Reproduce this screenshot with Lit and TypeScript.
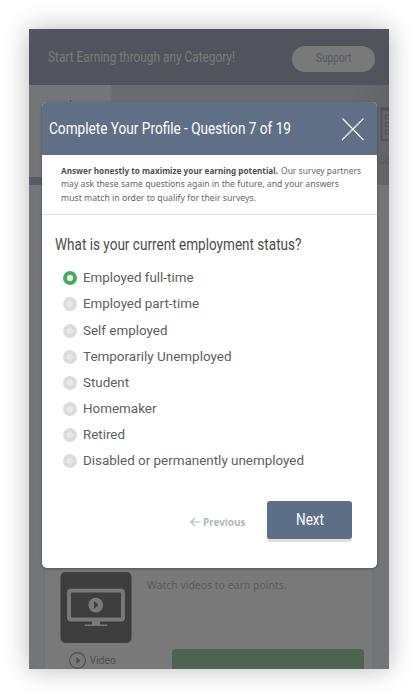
import { LitElement, html, css, svg } from "lit";
import { customElement, property, state } from "lit/decorators.js";

/** One line of text fitted to a fixed measure, for condensed headings and labels. */
@customElement("fit-text")
class FitText extends LitElement {
  @property() text = "";
  @property({ type: Number }) measure = 100;
  @property({ type: Number }) line = 16;
  @property({ type: Number }) base = 12;
  static styles = css`
    :host { display: block; flex: none; }
    svg { display: block; overflow: visible; }
    text { fill: currentColor; }
  `;
  render() {
    return html`<svg width=${this.measure} height=${this.line}>
      ${svg`<text x="0" y=${this.base} textLength=${this.measure} lengthAdjust="spacingAndGlyphs">${this.text}</text>`}
    </svg>`;
  }
}

@customElement("page-behind")
class PageBehind extends LitElement {
  static styles = css`
    :host { display: flex; flex-direction: column; height: 640px; background: #747578; font-family: Roboto, sans-serif; }
    header { flex: none; height: 56px; background: #51545c; display: flex; align-items: center; justify-content: space-between; padding: 0 14px 0 19px; box-sizing: border-box; }
    .tag { font-size: 14px; color: #7b7b79; }
    .support { width: 83px; height: 26px; margin-top: 3px; border-radius: 13px; background: #797979; display: flex; justify-content: center; align-items: center; color: #565962; font-size: 12px; }
    .tabs { flex: none; height: 100px; display: flex; justify-content: space-between; background: linear-gradient(90deg, #6a6c70 88%, #626468); }
    .tab { width: 82px; background: #747578; display: flex; flex-direction: column; justify-content: space-between; }
    .tab svg { margin: 15px 0 0 38px; }
    .bar { height: 8px; background: #595c67; }
    .next { width: 9px; padding-top: 22px; color: #55585e; font-size: 12px; }
    .next svg { display: block; }
    .next fit-text { margin-top: 11px; }
    .card { flex: 1; margin: 0 16px 0 15px; border: solid #707072; border-width: 0 1px; background: #797979; display: flex; align-items: flex-end; }
    .side { width: 72px; margin-left: 15px; height: 97px; display: flex; flex-direction: column; }
    .video { display: flex; margin: 9px 0 0 9px; gap: 3.5px; color: #4e4e4e; font-family: "Noto Sans", sans-serif; font-size: 11px; }
    .main { margin-left: 15px; height: 97px; display: flex; flex-direction: column; justify-content: space-between; font-family: "Noto Sans", sans-serif; color: #5a5a5a; font-size: 11px; }
    .main fit-text { padding-top: 5px; }
    .cta { width: 192px; height: 20px; margin-left: 25px; border-radius: 4px 4px 0 0; background: #4b6552; }
  `;
  render() {
    return html`
      <header>
        <fit-text class="tag" text="Start Earning through any Category!" measure="187" line="16" base="13"></fit-text>
        <div class="support"><fit-text text="Support" measure="35.500" line="16" base="10.500"></fit-text></div>
      </header>
      <div class="tabs">
        <div class="tab">
          <svg width="7" height="3"><path d="M3.500 0v3M2 2.500h3" stroke="#4b4e56" stroke-width="1.200" /></svg>
          <div class="bar"></div>
        </div>
        <div class="next">
          <svg width="9" height="34" fill="none" stroke="#505359">
            <path d="M1.500 1.500H25V33H1.500z" stroke-width="2" />
            <path d="M1 2H26" stroke-width="3" />
            <path d="M5.500 8h4v4h-4zM5.500 15.500h4v4h-4zM5.500 23h4v4h-4z" stroke-width="1.200" />
          </svg>
          <fit-text text="Su" measure="9" line="16" base="12"></fit-text>
        </div>
      </div>
      <div class="card">
        <div class="side">
          <svg width="72" height="72" viewBox="0 0 72 72">
            <rect width="72" height="72" rx="5" fill="#3e3e3e" />
            <rect x="8.700" y="18.900" width="54.600" height="29.200" rx="1.800" fill="none" stroke="#797979" stroke-width="4" />
            <path d="M32 49h8v4.200h7.500v1.500h-23v-1.500H32z" fill="#797979" />
            <circle cx="35.800" cy="33.500" r="7.500" fill="#797979" />
            <path d="M34 29.300v8.400l4.200-4.200z" fill="#3e3e3e" />
          </svg>
          <div class="video">
            <svg width="17" height="17" viewBox="0 0 17 17">
              <circle cx="8.500" cy="8.500" r="7.900" fill="none" stroke="#4e4e4e" stroke-width="1.100" />
              <path d="M7.500 4.800v7.400l4-3.700z" fill="#4e4e4e" />
            </svg>
            <fit-text text="Video" measure="26" line="16" base="11.500"></fit-text>
          </div>
        </div>
        <div class="main">
          <fit-text text="Watch videos to earn points." measure="139.500" line="16" base="12"></fit-text>
          <div class="cta"></div>
        </div>
      </div>
    `;
  }
}

const OPTIONS: [string, number][] = [
  ["Employed full-time", 110.5],
  ["Employed part-time", 116],
  ["Self employed", 84.5],
  ["Temporarily Unemployed", 148.5],
  ["Student", 46],
  ["Homemaker", 73.5],
  ["Retired", 42],
  ["Disabled or permanently unemployed", 221],
];

@customElement("profile-dialog")
class ProfileDialog extends LitElement {
  @state() private selected = 0;
  static styles = css`
    :host { display: flex; flex-direction: column; width: 335px; height: 466px; border-radius: 5px; overflow: hidden; background: #fff; box-shadow: 0 1px 3px #3338; font-family: Roboto, sans-serif; }
    header { flex: none; height: 53px; background: #5e6f86; color: #fff; font-size: 16px; display: flex; justify-content: space-between; align-items: center; box-sizing: border-box; padding: 0 12px 0 7px; }
    .info { flex: none; height: 60px; box-sizing: border-box; border-bottom: 1.5px solid #e2e2e2; padding: 9px 0 0 19.5px; font-family: "Noto Sans", sans-serif; font-size: 9.4px; color: #666; }
    .row { display: flex; gap: 3px; height: 13.4px; }
    .bold { font-weight: 700; color: #505050; }
    .question { font-size: 16px; color: #4c4c4c; margin: 20px 0 0 13.5px; }
    .options { margin: 10.300px 0 0 21.500px; display: flex; flex-direction: column; }
    .option { height: 26.1px; display: flex; align-items: center; gap: 6px; font-size: 13.600px; color: #606060; }
    .radio { box-sizing: border-box; width: 14px; height: 14px; border-radius: 50%; border: 4px solid #dcdcdc; background: #e9e9e9; }
    .on { border-color: #43ad5c; background: #fff; }
    .actions { display: flex; align-items: center; justify-content: flex-end; margin: 27px 24.500px 0 0; }
    .prev { display: flex; align-items: center; gap: 2.500px; color: #b0babd; font: 700 10.5px "Noto Sans", sans-serif; margin: 4px 22px 0 0; }
    .nextbtn { width: 85px; height: 38px; border-radius: 3px; background: #5d6f86; box-shadow: 0 3px 0 #dedede; color: #fff; font-size: 16px; display: flex; align-items: center; justify-content: center; }
  `;
  render() {
    return html`
      <header>
        <fit-text text="Complete Your Profile - Question 7 of 19" measure="242" line="18" base="13.500"></fit-text>
        <svg width="24" height="24"><path d="M1.500 1.500l21 21.500M22.500 1.500L1 23" stroke="#fff" stroke-width="1.100" /></svg>
      </header>
      <div class="info">
        <div class="row">
          <fit-text class="bold" text="Answer honestly to maximize your earning potential." measure="217" line="13" base="9.500"></fit-text>
          <fit-text text="Our survey partners" measure="80" line="13" base="9.500"></fit-text>
        </div>
        <div class="row"><fit-text text="may ask these same questions again in the future, and your answers" measure="278" line="13" base="9.500"></fit-text></div>
        <div class="row"><fit-text text="must match in order to qualify for their surveys." measure="195" line="13" base="9.500"></fit-text></div>
      </div>
      <fit-text class="question" text="What is your current employment status?" measure="246.500" line="20" base="15"></fit-text>
      <div class="options">
        ${OPTIONS.map(
          ([label, measure], i) => html`<div class="option" @click=${() => (this.selected = i)}>
            <span class="radio ${i === this.selected ? "on" : ""}"></span>
            <fit-text .text=${label} .measure=${measure} line="16" base="12"></fit-text>
          </div>`
        )}
      </div>
      <div class="actions">
        <div class="prev">
          <svg width="10" height="10" fill="none" stroke="#b0babd" stroke-width="1.200"><path d="M10 5H1M5 .8L.9 5L5 9.200" /></svg>
          <fit-text text="Previous" measure="42.500" line="14" base="10.500"></fit-text>
        </div>
        <div class="nextbtn"><fit-text text="Next" measure="28" line="18" base="14"></fit-text></div>
      </div>
    `;
  }
}

@customElement("app-root")
class AppRoot extends LitElement {
  static styles = css`
    :host { display: flex; box-sizing: border-box; width: 418px; height: 698px; padding: 29px; background: #fff; overflow: hidden; }
    .phone { position: relative; width: 360px; height: 640px; box-shadow: 0 0 24px rgba(0, 0, 0, 0.28); }
    profile-dialog { position: absolute; left: 12.500px; top: 73px; }
  `;
  render() {
    return html`<div class="phone"><page-behind></page-behind><profile-dialog></profile-dialog></div>`;
  }
}
